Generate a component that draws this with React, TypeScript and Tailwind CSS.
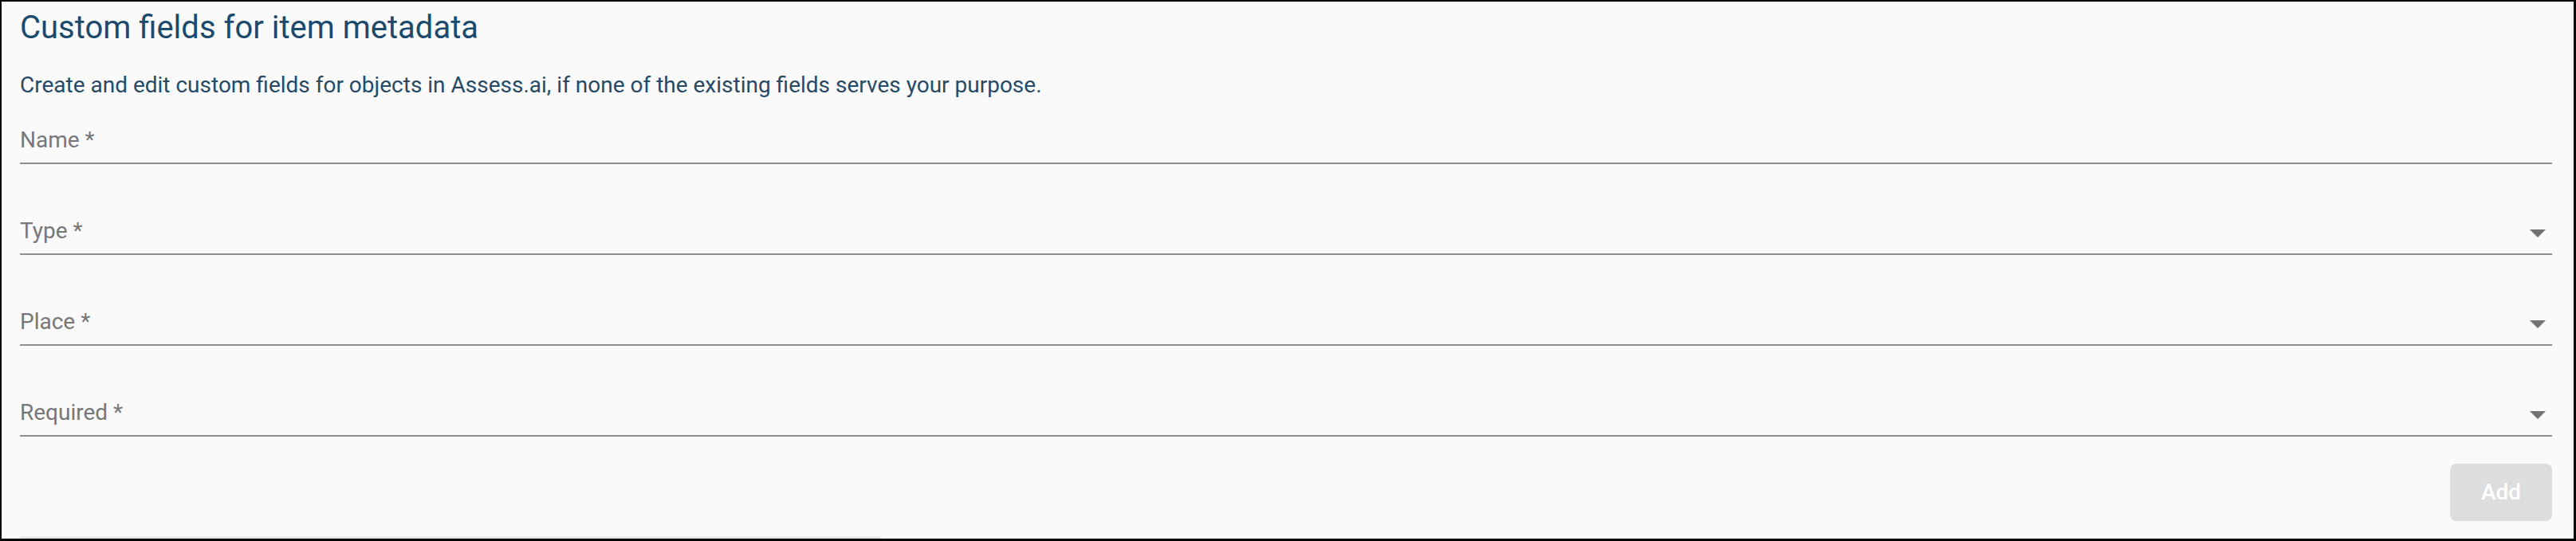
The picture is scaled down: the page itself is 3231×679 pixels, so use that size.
import React from "react";

const fields = [
  { label: "Name *", select: false },
  { label: "Type *", select: true },
  { label: "Place *", select: true },
  { label: "Required *", select: true },
];

function Arrow() {
  return (
    <svg
      width="20"
      height="10"
      viewBox="0 0 20 10"
      className="mt-[18px] mr-[8px] shrink-0 self-start"
    >
      <path d="M0 0 L10 10 L20 0 Z" fill="#737373" />
    </svg>
  );
}

export default function App() {
  return (
    <div
      className="box-border flex h-[679px] w-[3231px] flex-col border-t-2 border-l-2 border-r-[3px] border-b-[3px] border-black bg-[#fafafa]"
      style={{ fontFamily: "Roboto, 'Liberation Sans', sans-serif" }}
    >
      <div className="flex flex-col pl-[23px] pr-[27px] pt-[9px]">
        <h1 className="m-0 text-[40px] font-normal leading-[48px] text-[#1b4a6e]">
          Custom fields for item metadata
        </h1>
        <p className="mt-[28px] text-[28px] leading-[40px] text-[#274a66]">
          Create and edit custom fields for objects in Assess.ai, if none of the
          existing fields serves your purpose.
        </p>
        <div className="mt-[29px] flex flex-col gap-[64px]">
          {fields.map((f) => (
            <div
              key={f.label}
              className="flex flex-row border-b-2 border-[#8f8f8f] pb-[8px]"
            >
              <span className="flex-1 text-[28px] leading-[40px] text-[#777777]">
                {f.label}
              </span>
              {f.select && <Arrow />}
            </div>
          ))}
        </div>
        <button
          type="button"
          className="mt-[34px] flex h-[72px] w-[128px] items-center justify-center self-end rounded-[8px] bg-[#dddddd] text-[28px] font-medium text-white"
        >
          Add
        </button>
      </div>
      <div className="mt-auto ml-[23px] h-[3px] w-[1080px] bg-[#e6eaee]" />
    </div>
  );
}
